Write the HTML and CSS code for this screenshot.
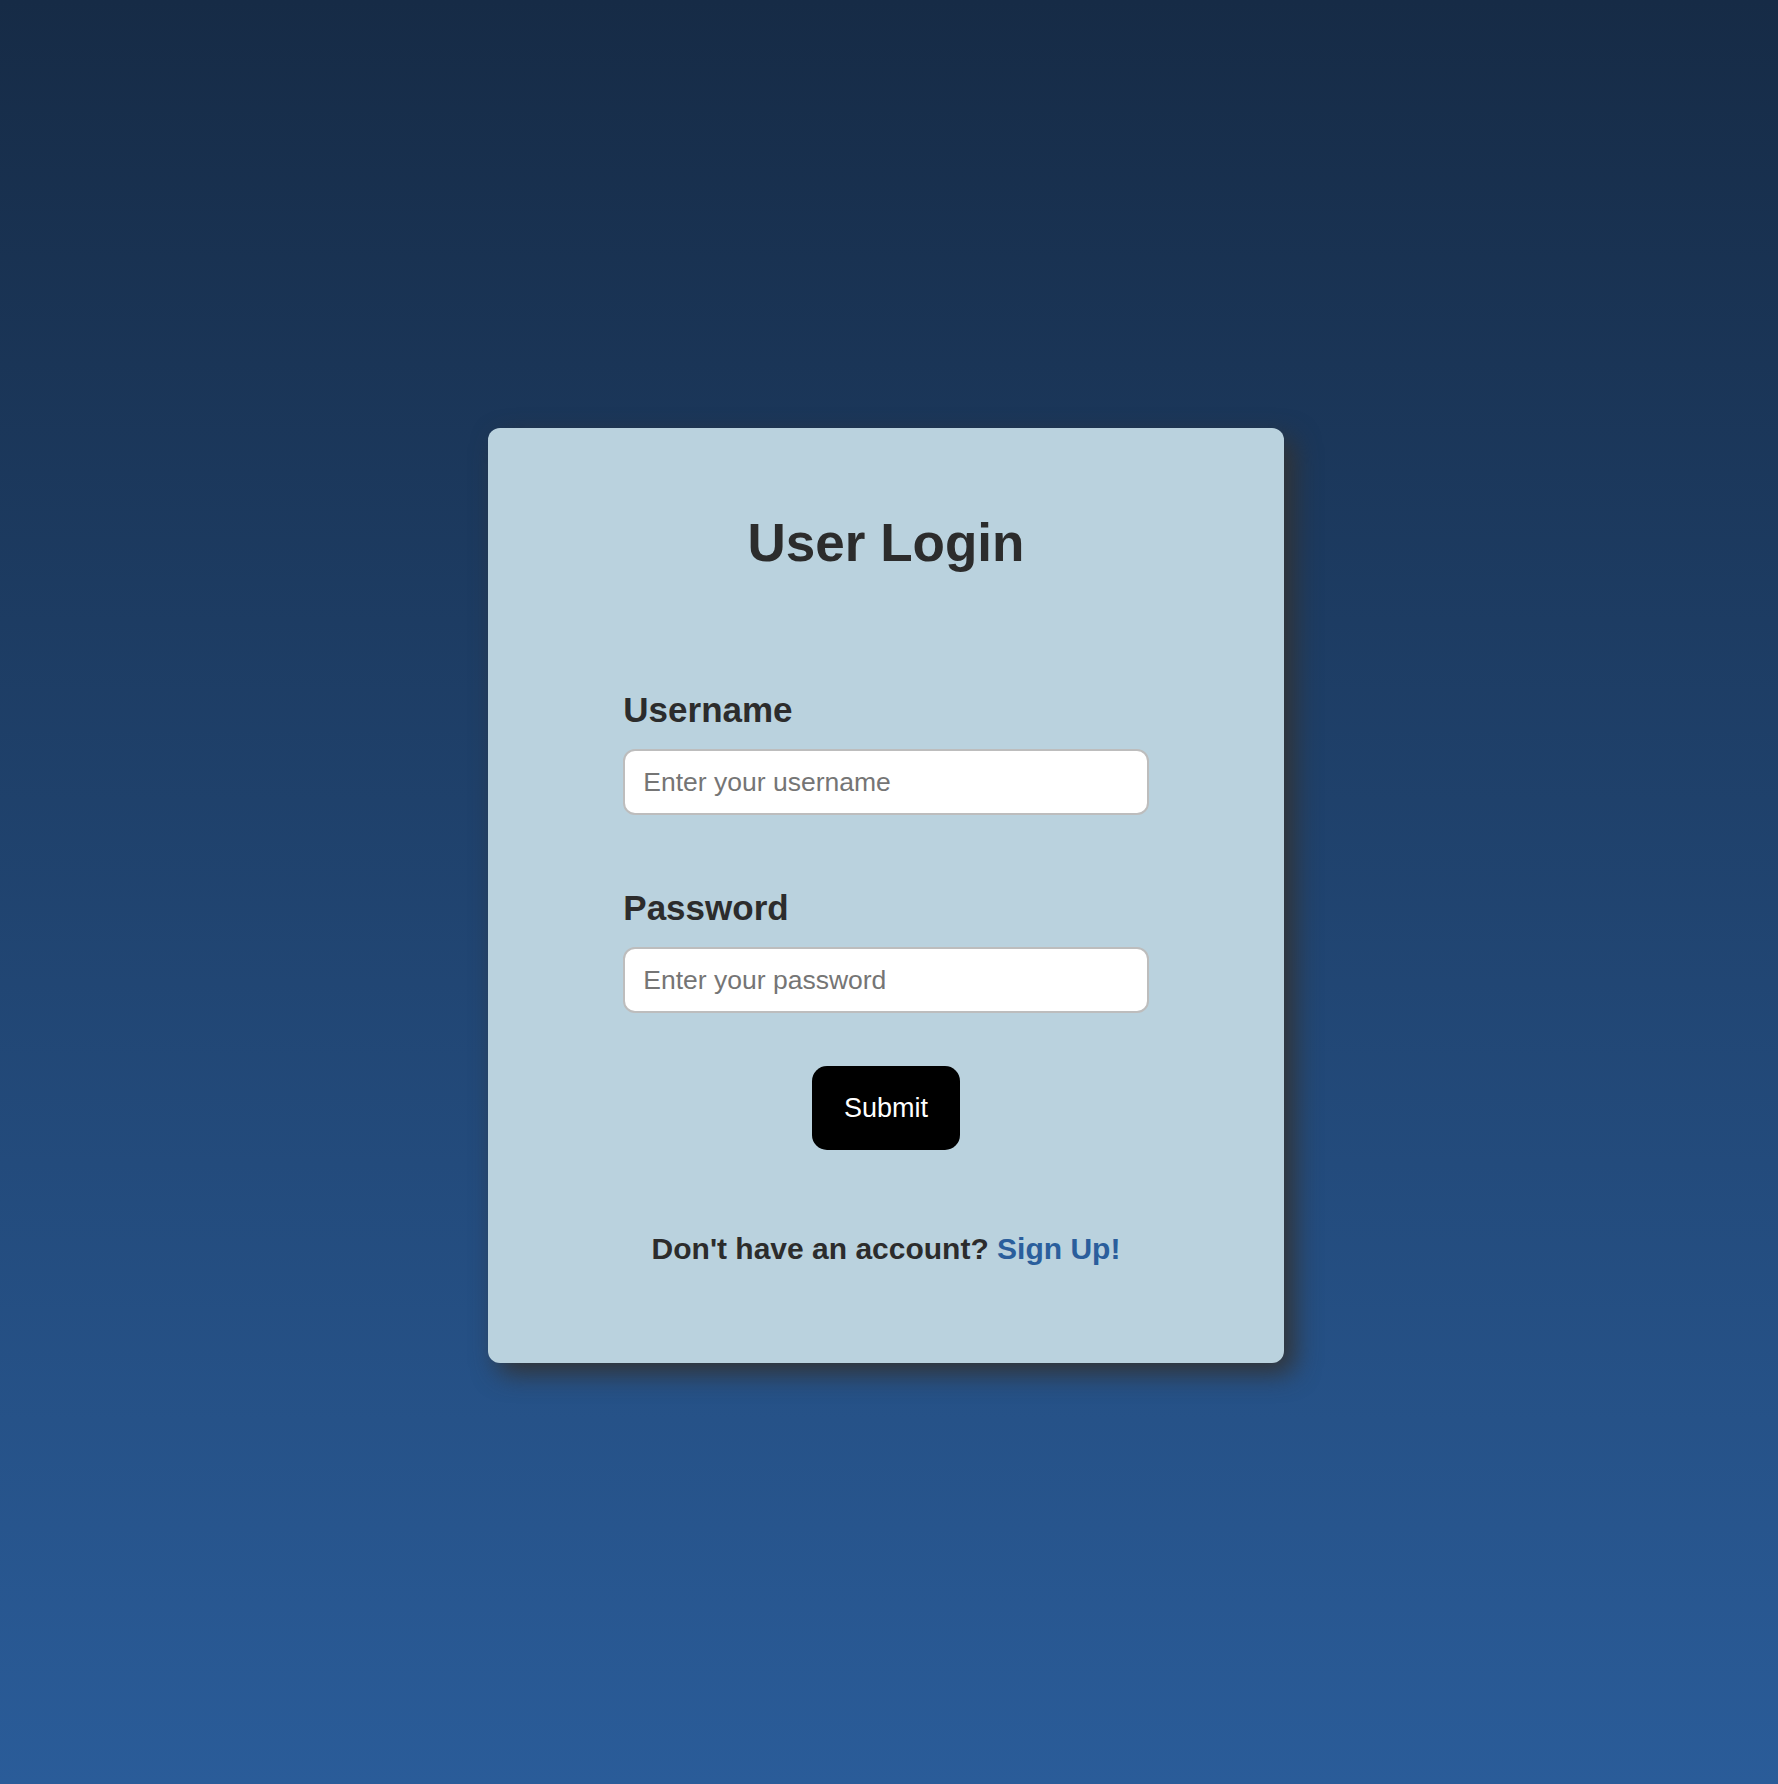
FILE: index.html
```html
<!DOCTYPE html>
<html lang="en">
<head>
<meta charset="utf-8">
<title>User Login</title>
<link rel="stylesheet" href="styles.css">
</head>
<body>
<main class="page">
  <section class="card">
    <h1 class="title">User Login</h1>
    <form class="form" onsubmit="return false;">
      <label class="label" for="username">Username</label>
      <input class="field" id="username" type="text" placeholder="Enter your username">
      <label class="label label-second" for="password">Password</label>
      <input class="field" id="password" type="password" placeholder="Enter your password">
      <div class="actions">
        <button class="submit" type="submit">Submit</button>
      </div>
    </form>
    <p class="footer">Don't have an account? <a class="signup" href="#">Sign Up!</a></p>
  </section>
</main>
</body>
</html>
```

FILE: styles.css
```css
html, body {
  margin: 0;
  padding: 0;
}

body {
  min-height: 1784px;
  background: linear-gradient(to bottom, #162b46 0%, #2a5c99 100%);
  font-family: "Liberation Sans", Arial, Helvetica, sans-serif;
  color: #2c2c2c;
}

.page {
  min-height: 1784px;
  box-sizing: border-box;
  display: flex;
  align-items: center;
  justify-content: center;
  padding: 7px 6px 0 0;
}

.card {
  width: 796px;
  height: 935px;
  box-sizing: border-box;
  background: #bad2de;
  border-radius: 12px;
  box-shadow: 10px 10px 26px #333;
  padding-top: 88px;
  display: flex;
  flex-direction: column;
  align-items: center;
}

.title {
  margin: 0;
  font-size: 53px;
  line-height: 1;
  font-weight: 700;
  color: #2c2c2c;
}

.form {
  width: 66%;
  margin-top: 123px;
  display: flex;
  flex-direction: column;
}

.label {
  font-size: 35px;
  line-height: 1;
  font-weight: 700;
  color: #2c2c2c;
  margin-bottom: 22px;
}

.label-second {
  margin-top: 75px;
  margin-bottom: 22px;
}

.field {
  box-sizing: border-box;
  width: 100%;
  height: 66px;
  padding: 0 18px;
  border: 2px solid #bdbdbd;
  border-radius: 12px;
  background: #fff;
  font-family: inherit;
  font-size: 26.5px;
  color: #333;
  outline: none;
}

.field::placeholder {
  color: #757575;
}

.actions {
  display: flex;
  justify-content: center;
  margin-top: 53px;
}

.submit {
  width: 148px;
  height: 84px;
  border: none;
  border-radius: 15px;
  background: #000;
  color: #fff;
  font-family: inherit;
  font-size: 27px;
  cursor: pointer;
}

.footer {
  margin: 84px 0 0;
  font-size: 30px;
  line-height: 1;
  font-weight: 700;
  color: #2c2c2c;
}

.signup {
  color: #2a5e9c;
  text-decoration: none;
}
```
